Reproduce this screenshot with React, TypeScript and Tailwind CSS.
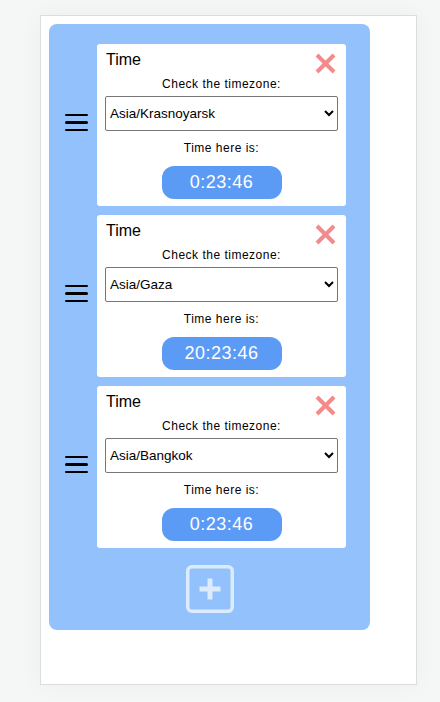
import React from "react";

const zones = [
  { tz: "Asia/Krasnoyarsk", time: "0:23:46" },
  { tz: "Asia/Gaza", time: "20:23:46" },
  { tz: "Asia/Bangkok", time: "0:23:46" },
];

const options = ["Asia/Krasnoyarsk", "Asia/Gaza", "Asia/Bangkok", "Europe/London", "America/New_York"];

function Handle() {
  return (
    <div className="flex flex-col gap-[5px] w-[23px] shrink-0 mb-[5px]">
      <span className="block h-[2.5px] bg-black rounded-full" />
      <span className="block h-[2.5px] bg-black rounded-full" />
      <span className="block h-[2.5px] bg-black rounded-full" />
    </div>
  );
}

function CloseIcon() {
  return (
    <svg width="21" height="21" viewBox="0 0 21 21" className="shrink-0">
      <line x1="2" y1="2" x2="19" y2="19" stroke="#f28b8b" strokeWidth="4" />
      <line x1="19" y1="2" x2="2" y2="19" stroke="#f28b8b" strokeWidth="4" />
    </svg>
  );
}

function TimeCard({ tz, time }: { tz: string; time: string }) {
  return (
    <div className="flex items-center gap-[9px]">
      <Handle />
      <div className="w-[249px] bg-white rounded-[3px] px-[8px] pt-[6px] pb-[7px] flex flex-col items-center">
        <div className="w-full flex justify-between items-start">
          <span className="text-[16px] leading-[20px] text-black pl-[1px]">Time</span>
          <div className="pt-[3px] pr-[2px]">
            <CloseIcon />
          </div>
        </div>
        <p className="text-[12px] leading-[16px] tracking-[0.5px] text-black mt-[2px]">Check the timezone:</p>
        <select
          defaultValue={tz}
          className="mt-[4px] w-full h-[35px] border border-[#767676] rounded-[2px] bg-white text-[13.5px] text-black px-0"
        >
          {options.map((o) => (
            <option key={o} value={o}>
              {o}
            </option>
          ))}
        </select>
        <p className="text-[12px] leading-[16px] tracking-[0.5px] text-black mt-[9px]">Time here is:</p>
        <div className="mt-[10px] w-[120px] h-[33px] rounded-[12px] bg-[#5b9bf6] flex items-center justify-center text-white text-[18px] tracking-[0.5px]">
          {time}
        </div>
      </div>
    </div>
  );
}

export default function App() {
  return (
    <div
      className="min-h-[702px] w-[440px] bg-[#f5f6f6] pt-[15px] pl-[40px]"
      style={{ fontFamily: '"Liberation Sans", Arial, sans-serif' }}
    >
      <div className="w-[377px] h-[670px] bg-white border border-[#dddddd] shadow-[0_0_24px_rgba(0,0,0,0.04)] p-[8px]">
        <div className="w-[321px] bg-[#93c1fb] rounded-[8px] pt-[20px] pb-[17px] pl-[16px] flex flex-col">
          <div className="flex flex-col gap-[9px]">
            {zones.map((z, i) => (
              <TimeCard key={i} tz={z.tz} time={z.time} />
            ))}
          </div>
          <div className="flex justify-center mt-[17px] pr-[16px]">
            <svg width="48" height="48" viewBox="0 0 48 48">
              <rect x="1.75" y="1.75" width="44.5" height="44.5" rx="4" fill="none" stroke="#dcebfe" strokeWidth="3.5" />
              <line x1="13.5" y1="24" x2="34.5" y2="24" stroke="#dcebfe" strokeWidth="5" />
              <line x1="24" y1="13.5" x2="24" y2="34.5" stroke="#dcebfe" strokeWidth="5" />
            </svg>
          </div>
        </div>
      </div>
    </div>
  );
}
